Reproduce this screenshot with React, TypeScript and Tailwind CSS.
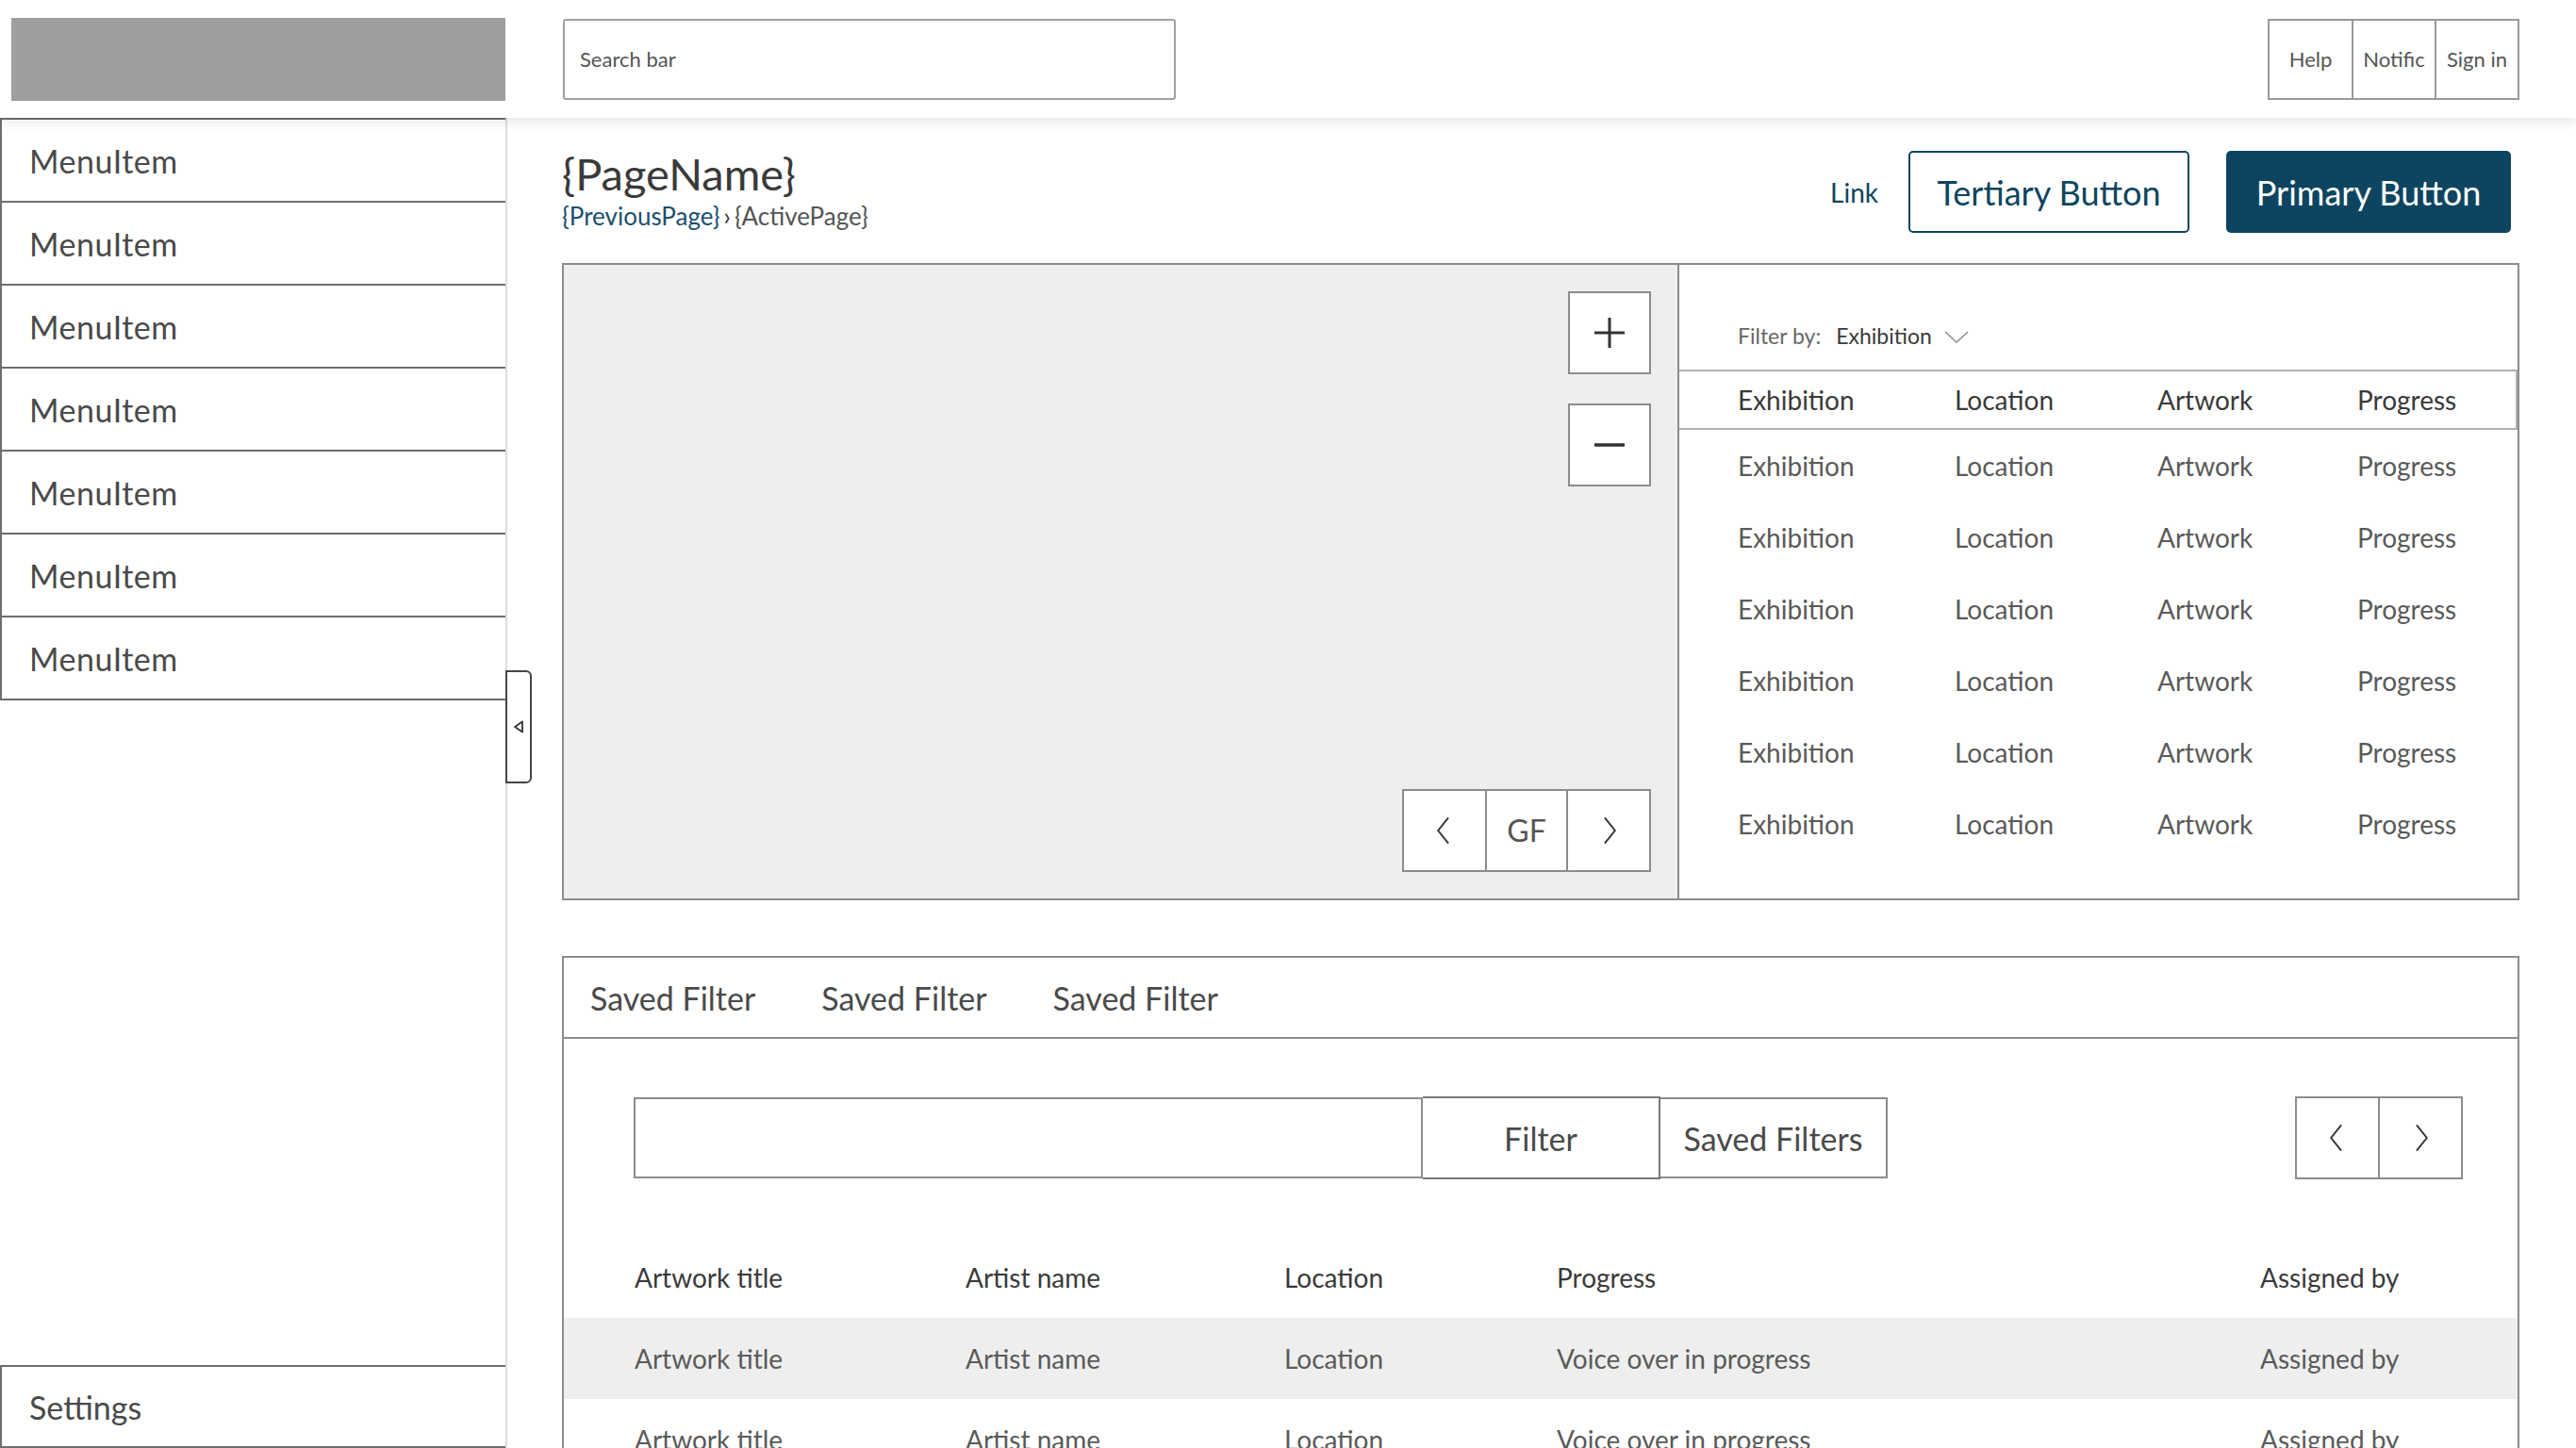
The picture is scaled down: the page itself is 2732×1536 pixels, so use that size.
import React from "react";

const font = { fontFamily: "Lato, 'Open Sans', sans-serif" };

function Chevron({ dir, size = 34 }: { dir: "left" | "right" | "down"; size?: number }) {
  const d =
    dir === "left" ? "M15 4 L7 14 L15 24" : dir === "right" ? "M9 4 L17 14 L9 24" : "M4 9 L14 17 L24 9";
  return (
    <svg width={size} height={size} viewBox="0 0 24 28" fill="none">
      <path d={d} stroke="#333" strokeWidth="1.4" />
    </svg>
  );
}

const menu = Array.from({ length: 7 });
const rightRows = Array.from({ length: 6 });

export default function App() {
  return (
    <div style={font} className="relative w-[2732px] h-[1536px] overflow-hidden bg-white text-[#4a4a4a]">
      {/* Header */}
      <header className="relative z-10 flex h-[125px] items-center bg-white shadow-[0_6px_10px_rgba(0,0,0,0.08)]">
        <div className="ml-[12px] h-[88px] w-[524px] bg-[#9e9e9e]" />
        <div className="ml-[61px] flex h-[86px] w-[650px] items-center rounded-[3px] border-2 border-[#a0a0a0] px-[16px] text-[22px] text-[#555]">
          Search bar
        </div>
        <div className="ml-auto mr-[60px] flex h-[86px] border-2 border-[#9a9a9a] text-[22px] text-[#555]">
          <div className="flex w-[87px] items-center justify-center">Help</div>
          <div className="flex w-[88px] items-center justify-center border-l-2 border-[#9a9a9a]">Notific</div>
          <div className="flex w-[88px] items-center justify-center border-l-2 border-[#9a9a9a]">Sign in</div>
        </div>
      </header>

      <div className="flex h-[1411px]">
        {/* Sidebar */}
        <aside className="relative flex h-full w-[538px] flex-col border-r-2 border-[#dddddd]">
          <div className="flex flex-col border-t-2 border-[#6e6e6e]">
            {menu.map((_, i) => (
              <div
                key={i}
                className="flex h-[88px] items-center border-b-2 border-l-2 border-[#6e6e6e] pl-[29px] text-[34px] tracking-[0.5px] text-[#4a4a4a]"
              >
                MenuItem
              </div>
            ))}
          </div>
          <div className="mt-auto flex h-[88px] items-center border-2 border-r-0 border-[#6e6e6e] pl-[29px] text-[34px] text-[#4a4a4a]">
            Settings
          </div>
          <div className="absolute left-[536px] top-[586px] flex h-[120px] w-[28px] items-center justify-center rounded-r-[6px] border-2 border-[#444] bg-white">
            <svg width="12" height="14" viewBox="0 0 12 14" fill="none">
              <path d="M10 1.5 L2 7 L10 12.5 Z" stroke="#333" strokeWidth="1.8" strokeLinejoin="round" />
            </svg>
          </div>
        </aside>

        {/* Content */}
        <main className="flex flex-1 flex-col pl-[58px] pr-[60px]">
          {/* Page header */}
          <div className="mt-[35px] flex h-[87px] shrink-0 items-center">
            <div className="-mt-[4px] flex flex-col">
              <div className="text-[47px] leading-[48px] text-[#3a3a3a]">{"{PageName}"}</div>
              <div className="mt-[6px] flex items-center text-[26px] leading-[30px]">
                <span className="text-[#1b4f6e]">{"{PreviousPage}"}</span>
                <span className="mx-[4px] text-[#333]">›</span>
                <span className="text-[#555]">{"{ActivePage}"}</span>
              </div>
            </div>
            <div className="ml-auto mr-[9px] flex items-center">
              <span className="mr-[32px] text-[28px] text-[#0d4560]">Link</span>
              <div className="flex h-[87px] w-[298px] items-center justify-center rounded-[5px] border-2 border-[#0d4560] text-[36px] text-[#0d4560]">
                Tertiary Button
              </div>
              <div className="ml-[39px] flex h-[87px] w-[302px] items-center justify-center rounded-[5px] bg-[#0d4560] text-[36px] text-white">
                Primary Button
              </div>
            </div>
          </div>

          {/* Map + table */}
          <div className="mt-[32px] flex h-[676px] shrink-0 border-2 border-[#8c8c8c]">
            <div className="flex w-[1183px] flex-col items-end justify-between border-r-2 border-[#8c8c8c] bg-[#eeeeee] p-[28px]">
              <div className="flex flex-col gap-[31px]">
                <div className="flex h-[88px] w-[88px] items-center justify-center border-2 border-[#8c8c8c] bg-white">
                  <svg width="40" height="40" viewBox="0 0 40 40">
                    <path d="M20 4 V36 M4 20 H36" stroke="#333" strokeWidth="3" />
                  </svg>
                </div>
                <div className="flex h-[88px] w-[88px] items-center justify-center border-2 border-[#8c8c8c] bg-white">
                  <svg width="40" height="40" viewBox="0 0 40 40">
                    <path d="M4 20 H36" stroke="#333" strokeWidth="3.5" />
                  </svg>
                </div>
              </div>
              <div className="flex h-[88px] border-2 border-[#8c8c8c] bg-white">
                <div className="flex w-[86px] items-center justify-center">
                  <Chevron dir="left" size={38} />
                </div>
                <div className="flex w-[88px] items-center justify-center border-x-2 border-[#8c8c8c] text-[32px] text-[#555]">
                  GF
                </div>
                <div className="flex w-[86px] items-center justify-center">
                  <Chevron dir="right" size={38} />
                </div>
              </div>
            </div>
            <div className="flex flex-1 flex-col">
              <div className="flex h-[111px] items-center pl-[62px] pt-[39px] text-[23px]">
                <span className="text-[#666]">Filter by:</span>
                <span className="ml-[16px] text-[#3a3a3a]">Exhibition</span>
                <span className="ml-[12px] mt-[4px]">
                  <svg width="28" height="16" viewBox="0 0 28 16" fill="none">
                    <path d="M2 2 L14 13 L26 2" stroke="#888" strokeWidth="1.4" />
                  </svg>
                </span>
              </div>
              <div className="flex h-[64px] items-center border-y-2 border-r-2 border-[#b0b0b0] text-[28px] text-[#3a3a3a]">
                <div className="w-[292px] pl-[62px]">Exhibition</div>
                <div className="w-[215px]">Location</div>
                <div className="w-[212px]">Artwork</div>
                <div>Progress</div>
              </div>
              {rightRows.map((_, i) => (
                <div key={i} className="flex h-[76px] items-center text-[28px] text-[#5a5a5a]">
                  <div className="w-[292px] pl-[62px]">Exhibition</div>
                  <div className="w-[215px]">Location</div>
                  <div className="w-[212px]">Artwork</div>
                  <div>Progress</div>
                </div>
              ))}
            </div>
          </div>

          {/* Bottom panel */}
          <div className="mt-[59px] flex shrink-0 flex-col border-2 border-b-0 border-[#8c8c8c]">
            <div className="flex h-[86px] shrink-0 items-center gap-[70px] border-b-2 border-[#8c8c8c] pl-[28px] text-[34px] text-[#4a4a4a]">
              <span>Saved Filter</span>
              <span>Saved Filter</span>
              <span>Saved Filter</span>
            </div>
            <div className="mt-[61px] flex h-[88px] shrink-0 items-center pl-[74px] pr-[58px]">
              <div className="h-[86px] w-[837px] border-2 border-[#8c8c8c]" />
              <div className="flex h-[88px] w-[252px] items-center justify-center border-2 border-l-0 border-[#777] text-[34px] text-[#4a4a4a]">
                Filter
              </div>
              <div className="flex h-[86px] w-[241px] items-center justify-center border-2 border-l-0 border-[#8c8c8c] text-[34px] text-[#4a4a4a]">
                Saved Filters
              </div>
              <div className="ml-auto flex h-[88px] border-2 border-[#8c8c8c]">
                <div className="flex w-[86px] items-center justify-center">
                  <Chevron dir="left" size={38} />
                </div>
                <div className="flex w-[88px] items-center justify-center border-l-2 border-[#8c8c8c]">
                  <Chevron dir="right" size={38} />
                </div>
              </div>
            </div>
            <div className="mt-[61px] flex h-[86px] shrink-0 items-center text-[28px] text-[#3a3a3a]">
              <div className="w-[426px] pl-[75px]">Artwork title</div>
              <div className="w-[338px]">Artist name</div>
              <div className="w-[289px]">Location</div>
              <div className="w-[746px]">Progress</div>
              <div>Assigned by</div>
            </div>
            {[0, 1].map((i) => (
              <div
                key={i}
                className={`flex h-[86px] shrink-0 items-center text-[28px] text-[#5a5a5a] ${i === 0 ? "bg-[#eeeeee]" : ""}`}
              >
                <div className="w-[426px] pl-[75px]">Artwork title</div>
                <div className="w-[338px]">Artist name</div>
                <div className="w-[289px]">Location</div>
                <div className="w-[746px]">Voice over in progress</div>
                <div>Assigned by</div>
              </div>
            ))}
          </div>
        </main>
      </div>
    </div>
  );
}
